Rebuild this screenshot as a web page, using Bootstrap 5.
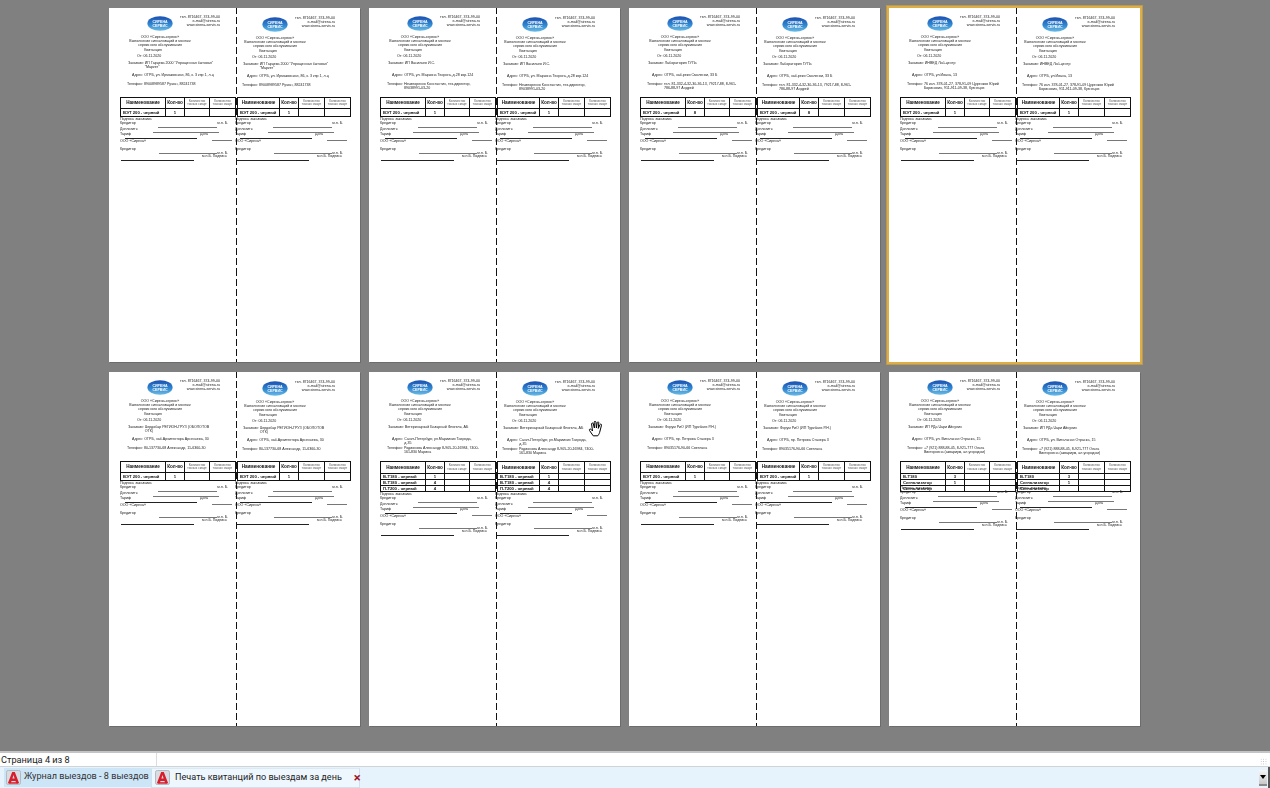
<!DOCTYPE html>
<html lang="ru">

<head>
    <meta charset="UTF-8" />
    <meta name="viewport" content="width=device-width, initial-scale=1.0" />
    <title>Печать квитанций по выездам за день</title>
    <link href="https://cdn.jsdelivr.net/npm/bootstrap@5.3.0/dist/css/bootstrap.min.css" rel="stylesheet" />
    <style>
        html, body { height: 100%; overflow: hidden; }
        body { font-family: "Liberation Sans", Arial, sans-serif; background: #808080; }

        .preview-area { background: #808080; padding: 8px 0 0 109px; display: grid; grid-template-columns: repeat(4, 251px); grid-auto-rows: 354px; column-gap: 9px; row-gap: 10px; position: relative; }
        .sheet { background: #fff; position: relative; display: flex; color: #222; font-size: 3.6px; line-height: 4px; box-shadow: 1px 1px 0 #6c6c6c; }
        .sheet-active { box-shadow: 0 0 0 2px #dcae45, 0 0 0 3px #b99a55; }
        .cut-line { position: absolute; left: 127px; top: 0; bottom: 0; border-left: 1px dashed #111; border-image: repeating-linear-gradient(#111 0 7px, transparent 7px 10px) 1; }
        .half { width: 115px; flex: none; filter: blur(0.3px); }
        .upper { height: 89px; padding-top: 7px; }
        .half-second .upper { padding-top: 8px; }
        .head-row { height: 14px; display: flex; }
        .logo-box { margin-left: 38px; width: 26px; height: 15px; flex: none; margin-top: 1px; }
        .contacts { margin-left: auto; margin-right: 4px; text-align: right; }
        .org { margin: 6px 0 0 11px; width: 80px; text-align: center; }
        .org b { display: block; font-weight: 400; }
        .receipt-title { margin: 1px 0 0 11px; width: 66px; text-align: center; }
        .receipt-date { margin: 2px 0 0 28px; }
        .info-line { display: flex; gap: 1px; }
        .info-client { height: 12px; margin-top: 3px; padding-left: 19px; padding-right: 10px; }
        .info-addr { height: 9px; padding-left: 23px; padding-right: 5px; }
        .info-phone { padding-left: 18px; padding-right: 3px; }
        .info-line span:first-child { flex: none; }

        .ticket-table { margin: 0 0 0 11px; width: 115px; table-layout: fixed; border-collapse: collapse; color: #111; }
        .half-second .ticket-table { margin-left: 13px; width: 113px; }
        .ticket-table th, .ticket-table td { border: 1px solid #111; padding: 0; background: transparent; text-align: center; vertical-align: middle; font-weight: 400; line-height: 4px; color: #111; box-shadow: none; }
        .ticket-table th { height: 11px; font-size: 3.1px; line-height: 3.4px; color: #555; }
        .ticket-table th.big-head { font-size: 4.6px; font-weight: 700; color: #111; }
        .ticket-table td { height: var(--row-h, 8px); font-size: 4.2px; font-weight: 700; }
        .ticket-table td.item-name { text-align: left; padding-left: 2px; overflow: visible; white-space: nowrap; }

        .sign-block { display: grid; grid-template-columns: 1fr; grid-template-rows: repeat(46, 1px); width: 115px; }
        .sign-item { grid-column: 1; white-space: nowrap; height: 4px; }
        .sign-rule { grid-column: 1; height: 1px; background: #777; }
        .sign-rule.dark { background: #222; }

        .hand-cursor { position: absolute; left: 588px; top: 420px; width: 16px; height: 17px; }

        .status-strip { height: 16px; background: #fff; border-top: 2px solid #c4c4c4; border-bottom: 1px solid #cfd4d8; display: flex; font-family: Roboto, sans-serif; font-size: 9.2px; line-height: 13px; color: #222; position: relative; }
        .status-cell { width: 157px; padding-left: 1px; border-right: 1px solid #dcdcdc; }
        .grip { position: absolute; right: 3px; bottom: 1px; width: 7px; height: 7px; background: radial-gradient(circle, #b5b5b5 30%, transparent 35%) 0 0 / 2.4px 2.4px; }
        .tab-strip { height: 21px; background: #e6f3fd; border-right: 2px solid #555; display: flex; align-items: stretch; padding: 1px 0 0 4px; font-family: Roboto, sans-serif; font-size: 9.1px; color: #333; position: relative; }
        .doc-tab { display: flex; align-items: center; gap: 3px; white-space: nowrap; padding: 0 1px 1px 2px; flex: none; }
        .doc-tab svg { flex: none; }
        .doc-tab-back { background: #cde6f7; width: 147px; margin-bottom: 1px; }
        .doc-tab-front { background: #eef7fe; border: 1px solid #cfe0ee; border-top-color: #dbe9f4; width: 209px; color: #222; padding-left: 3px; gap: 5px; }
        .tab-close { margin-left: 7px; color: #a0141e; font-weight: 700; font-size: 13px; line-height: 1; }
        .tab-menu { position: absolute; right: 1px; top: 3px; width: 8px; height: 16px; background: linear-gradient(#f7f7f7, #c9c9c9); border-bottom: 2px solid #8a8a8a; display: flex; align-items: center; justify-content: center; }
        .tab-menu i { display: block; width: 0; height: 0; border-left: 3px solid transparent; border-right: 3px solid transparent; border-top: 4px solid #000; }
    </style>
</head>

<body class="d-flex flex-column vh-100">
    <div class="preview-area flex-grow-1" id="previewArea"></div>

    <div class="status-strip">
        <div class="status-cell">Страница 4 из 8</div>
        <div class="grip"></div>
    </div>

    <div class="tab-strip">
        <div class="doc-tab doc-tab-back">
            <svg width="15" height="15" viewBox="0 0 16 16"><use href="#appIcon" /></svg>
            <span>Журнал выездов - 8 выездов</span>
        </div>
        <div class="doc-tab doc-tab-front">
            <svg width="15" height="15" viewBox="0 0 16 16"><use href="#appIcon" /></svg>
            <span>Печать квитанций по выездам за день</span>
            <span class="tab-close">×</span>
        </div>
        <div class="tab-menu"><i></i></div>
    </div>

    <svg width="0" height="0" class="d-block position-absolute">
        <defs>
            <symbol id="appIcon" viewBox="0 0 16 16">
                <rect x="0.5" y="0.5" width="15" height="15" rx="2" fill="#d9dde2" stroke="#aeb6bd" />
                <path d="M6.6 2h2.8L14 14h-3.1l-.8-2.4H5.9L5.1 14H2zM6.8 9h2.4L8 5.4z" fill="#d81e2c" />
                <rect x="3" y="13" width="10" height="1.6" fill="#d81e2c" />
            </symbol>
            <linearGradient id="logoFill" x1="0" y1="0" x2="0" y2="1">
                <stop offset="0" stop-color="#1c4fb0" />
                <stop offset="0.55" stop-color="#2f86d0" />
                <stop offset="1" stop-color="#6dbce4" />
            </linearGradient>
        </defs>
    </svg>

    <script>
        const pages = [
            { client: 'ИП Гарцева 2000 "Упрощенная бытовая" "Маркет"', addr: 'ОГРБ, ул. Ирмаковская, 86, к. 3 кпр 1, л.ц', phone: '89008989587 Ружан, 88241738', rows: [['ВЭТ 200 - черный', '1']] },
            { client: 'ИП Васильев И.С.', addr: 'ОГРБ, ул. Марьина Творога, д.28 кор.124', phone: 'Нечипоренко Константин, тех.директор, 89038991-03-20', rows: [['ВЭТ 200 - черный', '1']] },
            { client: 'Лаборатория ГУПа', addr: 'ОГРБ, наб.реки Смоленки, 33 Б', phone: 'тел. 81-332-4-32-30-36-13, 79217-88, 8-961-786-88-97 Андрей', rows: [['ВЭТ 200 - черный', '8']] },
            { client: 'ИНВЕД Лаб-центр', addr: 'ОГРБ, ул.Ивана, 13', phone: '76 кол. 378-01-27, 378-91-09 Цуренков Юрий Борисович, 911-911-09-38, Кузнецов', rows: [['ВЭТ 200 - черный', '1']] },
            { client: 'Чердобар РЕГИОН-ГРУЗ (ОБОЛОТОВ ОТК)', addr: 'ОГРБ, наб.Архитектора Арсеньева, 30', phone: '80-137730-68 Александр, 11-6360-30', rows: [['ВЭТ 200 - черный', '1']] },
            { client: 'Ветеринарный Базарный Флигель, АБ', addr: 'Санкт-Петербург, ул.Мариинки Таврида, д.35', phone: 'Родионова Александр 8-905-20-16984, 7400-161-830 Марина', rows: [['В-Т180 - черный', '1'], ['В-Т180 - черный', '4'], ['П-Т200 - черный', '4']], rowH: '6px', headH: '12px' },
            { client: 'Форум РиО (ИП Туркбаев Р.Н.)', addr: 'ОГРБ, пр. Петрова Стачера 3', phone: '89035176-90-66 Светлана', rows: [['ВЭТ 200 - черный', '1']] },
            { client: 'ИП РДа Чари Айнулин', addr: 'ОГРБ, ул. Витальная Отраска, 15', phone: '+7 (921) 888-88-45, 8-921-777 Ольга Викторовна (аквариум, ал.угородом)', rows: [['В-Т180', '3'], ['Сигнализатор', '1'], ['Сигнализатор', '']], rowH: '6px', headH: '12px', shift: -6 }
        ];

        // y, x, width: positions inside the signature block, measured from the reference
        const signLabels = [
            [0, 11, 'Подпись заказчика'], [4, 11, 'Кредитор'], [10, 11, 'Доплатить'], [15, 11, 'Тариф'],
            [15, 91, 'Дата'], [22, 11, 'ООО «Сирена»'], [30, 11, 'Кредитор']
        ];
        const signRight = [[4, 119, 'м.п. Б.'], [34, 119, 'м.п. Б.'], [37, 118, 'м.п.Б. Подпись']];
        const signRules = [
            [10, 49, 59, ''], [15, 44, 66, ''], [21, 16, 72, 'dark'], [23, 103, 20, ''],
            [36, 50, 58, ''], [43, 12, 73, 'dark']
        ];

        const logoSvg = `<svg class="logo-box" viewBox="0 0 26 15">
            <ellipse cx="13" cy="7.5" rx="12.6" ry="7.3" fill="url(#logoFill)" />
            <text x="13" y="6.6" text-anchor="middle" font-size="3.6" font-weight="700" fill="#fff" font-family="Liberation Sans">СИРЕНА</text>
            <text x="13" y="11" text-anchor="middle" font-size="3.6" font-weight="700" fill="#fff" font-family="Liberation Sans">СЕРВИС</text>
        </svg>`;

        function renderSign(page) {
            const shift = page.shift || 0;
            const labels = signLabels.map(l => `<div class="sign-item" style="grid-row:${l[0] + 1} / span 4;margin-left:${l[1]}px">${l[2]}</div>`);
            const right = signRight.map(l => `<div class="sign-item text-end" style="grid-row:${l[0] + 1} / span 4;width:${l[1]}px">${l[2]}</div>`);
            const rules = signRules.map(r => `<div class="sign-rule ${r[3]}" style="grid-row:${r[0] + 1};margin-left:${r[1]}px;width:${r[2]}px"></div>`);
            return `<div class="sign-block" style="margin-top:${shift}px">${labels.join('')}${right.join('')}${rules.join('')}</div>`;
        }

        function renderHalf(page, second) {
            const widths = second ? [42, 19, 26, 26] : [45, 19, 25, 26];
            const rows = page.rows.map(r => `<tr style="--row-h:${page.rowH || '8px'}">
                <td class="item-name">${r[0]}</td><td>${r[1]}</td><td></td><td></td></tr>`).join('');
            return `<div class="half ${second ? 'half-second' : ''}">
                <div class="upper">
                    <div class="head-row">${logoSvg}
                        <div class="contacts">тел. 8716467, 374-99-00<br>e-mail@sirena.ru<br>www.sirena-servis.ru</div>
                    </div>
                    <div class="org"><b>ООО «Сирена-сервис»</b>Выполнение сигнализаций и монтаж<br>сервисного обслуживания</div>
                    <div class="receipt-title">Квитанция</div>
                    <div class="receipt-date">От: 06.11.2020</div>
                    <div class="info-line info-client"><span>Заказчик:</span><span>${page.client}</span></div>
                    <div class="info-line info-addr"><span>Адрес:</span><span>${page.addr}</span></div>
                    <div class="info-line info-phone"><span>Телефон:</span><span>${page.phone}</span></div>
                </div>
                <table class="table ticket-table">
                    <colgroup>${widths.map(w => `<col style="width:${w}px">`).join('')}</colgroup>
                    <thead><tr style="--row-h:${page.headH || '11px'}">
                        <th class="big-head" style="height:${page.headH || '11px'}">Наименование</th><th class="big-head">Кол-во</th>
                        <th>Количество точных смарт</th><th>Количество точных смарт</th>
                    </tr></thead>
                    <tbody>${rows}</tbody>
                </table>
                ${renderSign(page)}
            </div>`;
        }

        document.getElementById('previewArea').innerHTML = pages.map((page, i) => `
            <div class="sheet ${i === 3 ? 'sheet-active' : ''}">
                ${renderHalf(page, false)}${renderHalf(page, true)}
                <div class="cut-line"></div>
            </div>`).join('') + `
            <svg class="hand-cursor" viewBox="0 0 16 17" fill="#fff" stroke="#000" stroke-width="1" stroke-linejoin="round" stroke-linecap="round">
                <path d="M5 15.5 1.5 10.5c-.7-1 .6-2 1.5-1.2L4.5 11 3.6 4c-.1-1.2 1.4-1.4 1.7-.3L6.4 8 6.2 2.2c0-1.2 1.6-1.2 1.7 0L8.4 8l.8-5.4c.2-1.1 1.7-.9 1.6.2L10.3 8.4l1.7-3.8c.5-1 1.8-.4 1.5.6L12 11c-.4 2-1 3.3-2 4.5z" />
            </svg>`;
    </script>
    <script src="https://cdn.jsdelivr.net/npm/bootstrap@5.3.0/dist/js/bootstrap.bundle.min.js"></script>
</body>

</html>
